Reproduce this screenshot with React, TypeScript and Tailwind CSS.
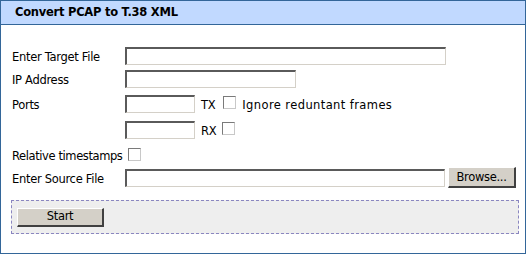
import React from "react";

const inputCls =
  "h-[18px] bg-white border-t-2 border-l-2 border-b border-r border-t-[#5a5a5a] border-l-[#5a5a5a] border-b-[#d4d0c8] border-r-[#d4d0c8] box-border";

function Check() {
  return (
    <span className="inline-block w-[13px] h-[13px] bg-white border-t border-l border-b border-r border-t-[#7a7a7a] border-l-[#7a7a7a] border-b-[#c8c8c8] border-r-[#c8c8c8] box-border" />
  );
}

export default function App() {
  return (
    <div
      className="w-[526px] h-[254px] border border-[#336699] bg-white box-border text-[12px] text-black"
      style={{ fontFamily: '"DejaVu Sans", sans-serif' }}
    >
      <div className="h-[23px] bg-[#c1d9ff] border-b border-[#336699] box-content flex items-center pl-[14px]">
        <span className="font-bold text-[11.5px] tracking-[-0.25px]">Convert PCAP to T.38 XML</span>
      </div>
      <div className="pt-[22px] pl-[11px] text-[11.5px] tracking-[-0.3px]">
        <div className="flex h-[23px] items-start">
          <span className="w-[113px] mt-[2px]">Enter Target File</span>
          <div className={`${inputCls} w-[321px]`} />
        </div>
        <div className="flex h-[25px] items-start">
          <span className="w-[113px] mt-[2px]">IP Address</span>
          <div className={`${inputCls} w-[171px]`} />
        </div>
        <div className="flex h-[26px] items-start">
          <span className="w-[113px] mt-[2px]">Ports</span>
          <div className={`${inputCls} w-[70px]`} />
          <span className="ml-[6px] mt-[2px]">TX</span>
          <span className="ml-[8px] mt-[1px] flex"><Check /></span>
          <span className="ml-[6px] mt-[2px] tracking-[0.4px]">Ignore reduntant frames</span>
        </div>
        <div className="flex h-[26px] items-start">
          <span className="w-[113px]" />
          <div className={`${inputCls} w-[70px]`} />
          <span className="ml-[6px] mt-[2px]">RX</span>
          <span className="ml-[6px] mt-[1px] flex"><Check /></span>
        </div>
        <div className="flex h-[22px] items-start">
          <span className="mt-[1px] tracking-[-0.4px]">Relative timestamps</span>
          <span className="ml-[6px] mt-[1px] flex"><Check /></span>
        </div>
        <div className="flex h-[31px] items-start">
          <span className="w-[113px] mt-[2px]">Enter Source File</span>
          <div className={`${inputCls} w-[320px]`} />
          <button className="ml-[3px] -mt-[2px] w-[68px] h-[21px] bg-[#d4d0c8] border-t border-l border-b-2 border-r-2 border-t-white border-l-white border-b-[#404040] border-r-[#404040] box-border flex items-center justify-center text-[11.5px] pt-[1px]">
            Browse...
          </button>
        </div>
        <div className="ml-[-1px] w-[508px] h-[34px] bg-[#eeeeee] border border-dashed border-[#8a86c0] box-border flex items-start pl-[5px] pt-[7px]">
          <button className="w-[87px] h-[19px] bg-[#d4d0c8] border-t border-l border-b-2 border-r-2 border-t-white border-l-white border-b-[#404040] border-r-[#404040] box-border flex items-center justify-center text-[11.5px]">
            Start
          </button>
        </div>
      </div>
    </div>
  );
}
